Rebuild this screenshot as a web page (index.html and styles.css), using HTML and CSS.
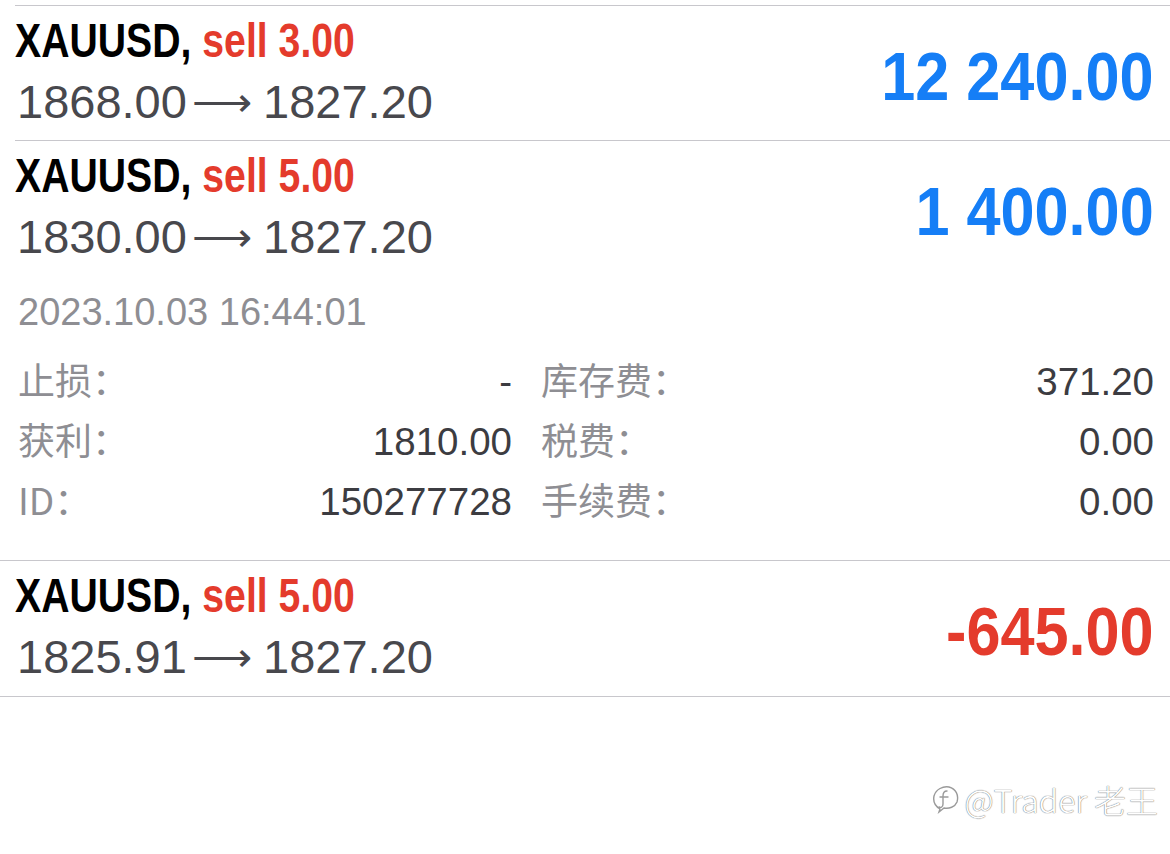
FILE: index.html
```html
<!DOCTYPE html>
<html lang="zh-CN">
<head>
    <meta charset="UTF-8">
    <meta name="viewport" content="width=device-width, initial-scale=1.0">
    <title>交易</title>
    <link rel="stylesheet" href="styles.css">
</head>
<body>
    <div class="trades">
        <div class="trade">
            <div class="trade-head">
                <div class="trade-info">
                    <div class="title"><span class="narrow">XAUUSD, <span class="sell">sell 3.00</span></span></div>
                    <div class="prices">1868.00 <span class="arrow">⟶</span> 1827.20</div>
                </div>
                <div class="profit plus"><span class="narrow">12 240.00</span></div>
            </div>
        </div>

        <div class="trade open">
            <div class="trade-head">
                <div class="trade-info">
                    <div class="title"><span class="narrow">XAUUSD, <span class="sell">sell 5.00</span></span></div>
                    <div class="prices">1830.00 <span class="arrow">⟶</span> 1827.20</div>
                </div>
                <div class="profit plus"><span class="narrow">1 400.00</span></div>
            </div>
            <div class="date">2023.10.03 16:44:01</div>
            <div class="details">
                <div class="cell"><span class="label">止损：</span><span class="value">-</span></div>
                <div class="cell"><span class="label">库存费：</span><span class="value">371.20</span></div>
                <div class="cell"><span class="label">获利：</span><span class="value">1810.00</span></div>
                <div class="cell"><span class="label">税费：</span><span class="value">0.00</span></div>
                <div class="cell"><span class="label">ID：</span><span class="value">150277728</span></div>
                <div class="cell"><span class="label">手续费：</span><span class="value">0.00</span></div>
            </div>
        </div>

        <div class="trade last">
            <div class="trade-head">
                <div class="trade-info">
                    <div class="title"><span class="narrow">XAUUSD, <span class="sell">sell 5.00</span></span></div>
                    <div class="prices">1825.91 <span class="arrow">⟶</span> 1827.20</div>
                </div>
                <div class="profit minus"><span class="narrow">-645.00</span></div>
            </div>
        </div>
    </div>

    <div class="watermark">
        <svg width="28" height="30" viewBox="0 0 28 30" fill="none" stroke="#9a9a9a" stroke-width="1.4" stroke-linecap="round">
            <path d="M8 25 C3 22 1 17 2 12 C4 5 11 2 17 3 C24 5 27 11 25 18 C23 23 17 25 12 24 L7 28 L8 25"/>
            <path d="M15 7 C12 7 11 9 11 12 L11 20 C11 23 9 24 7 23"/>
            <path d="M8 13 L16 13"/>
        </svg>
        <span>@Trader 老王</span>
    </div>
</body>
</html>
```

FILE: styles.css
```css
body {
    margin: 0;
    background-color: #fff;
    font-family: "Liberation Sans", Arial, "Noto Sans CJK SC", sans-serif;
    position: relative;
    height: 854px;
    overflow: hidden;
}

.trades {
    padding-top: 5px;
}

.trade {
    margin-left: 15px;
    border-top: 1px solid #c8c7cc;
    padding: 4px 16px 6px 0;
}

.trade.last {
    margin-left: 0;
    padding-left: 15px;
    padding-bottom: 7px;
    border-bottom: 1px solid #c8c7cc;
}

.trade-head {
    display: flex;
    justify-content: space-between;
    align-items: center;
}

/* condensed bold look */
.narrow {
    display: inline-block;
    white-space: nowrap;
    vertical-align: top;
}

.title {
    font-weight: bold;
    font-size: 49px;
    line-height: 60px;
    height: 60px;
    color: #000;
    width: 420px;
}

.title .narrow {
    transform: scaleX(0.8);
    transform-origin: left center;
}

.sell {
    color: #e43b2c;
}

.prices {
    font-size: 47px;
    line-height: 64px;
    height: 64px;
    color: #48484d;
    padding-left: 2px;
    white-space: nowrap;
    word-spacing: -8px;
}

.arrow {
    font-family: "DejaVu Sans", sans-serif;
    font-weight: 200;
    font-size: 42px;
    line-height: 1;
    vertical-align: 2px;
    margin-right: 6px;
}

.profit {
    font-weight: bold;
    font-size: 68px;
    line-height: 80px;
    height: 80px;
    padding-top: 8px;
}

.profit .narrow {
    transform: scaleX(0.9);
    transform-origin: right center;
}

.profit.plus {
    color: #157ef6;
}

.profit.minus {
    color: #e43b2c;
}

.date {
    font-size: 38px;
    line-height: 50px;
    color: #8e8e93;
    padding: 18px 0 0 3px;
}

.details {
    display: grid;
    grid-template-columns: 494px 1fr;
    column-gap: 29px;
    padding: 12px 0 25px 3px;
}

.cell {
    display: flex;
    justify-content: space-between;
    align-items: baseline;
    height: 60px;
    line-height: 60px;
}

.label {
    font-family: "Noto Sans CJK SC", sans-serif;
    font-size: 37px;
    color: #8e8e93;
}

.value {
    font-size: 38.5px;
    color: #3c3c41;
}

.watermark {
    position: absolute;
    right: 12px;
    bottom: 32px;
    display: flex;
    align-items: center;
    gap: 5px;
    font-family: "Noto Sans CJK SC", sans-serif;
    font-weight: 300;
    font-size: 32px;
    color: #fff;
    text-shadow: 0 0 1px #777, 0 0 1px #777;
}
```
